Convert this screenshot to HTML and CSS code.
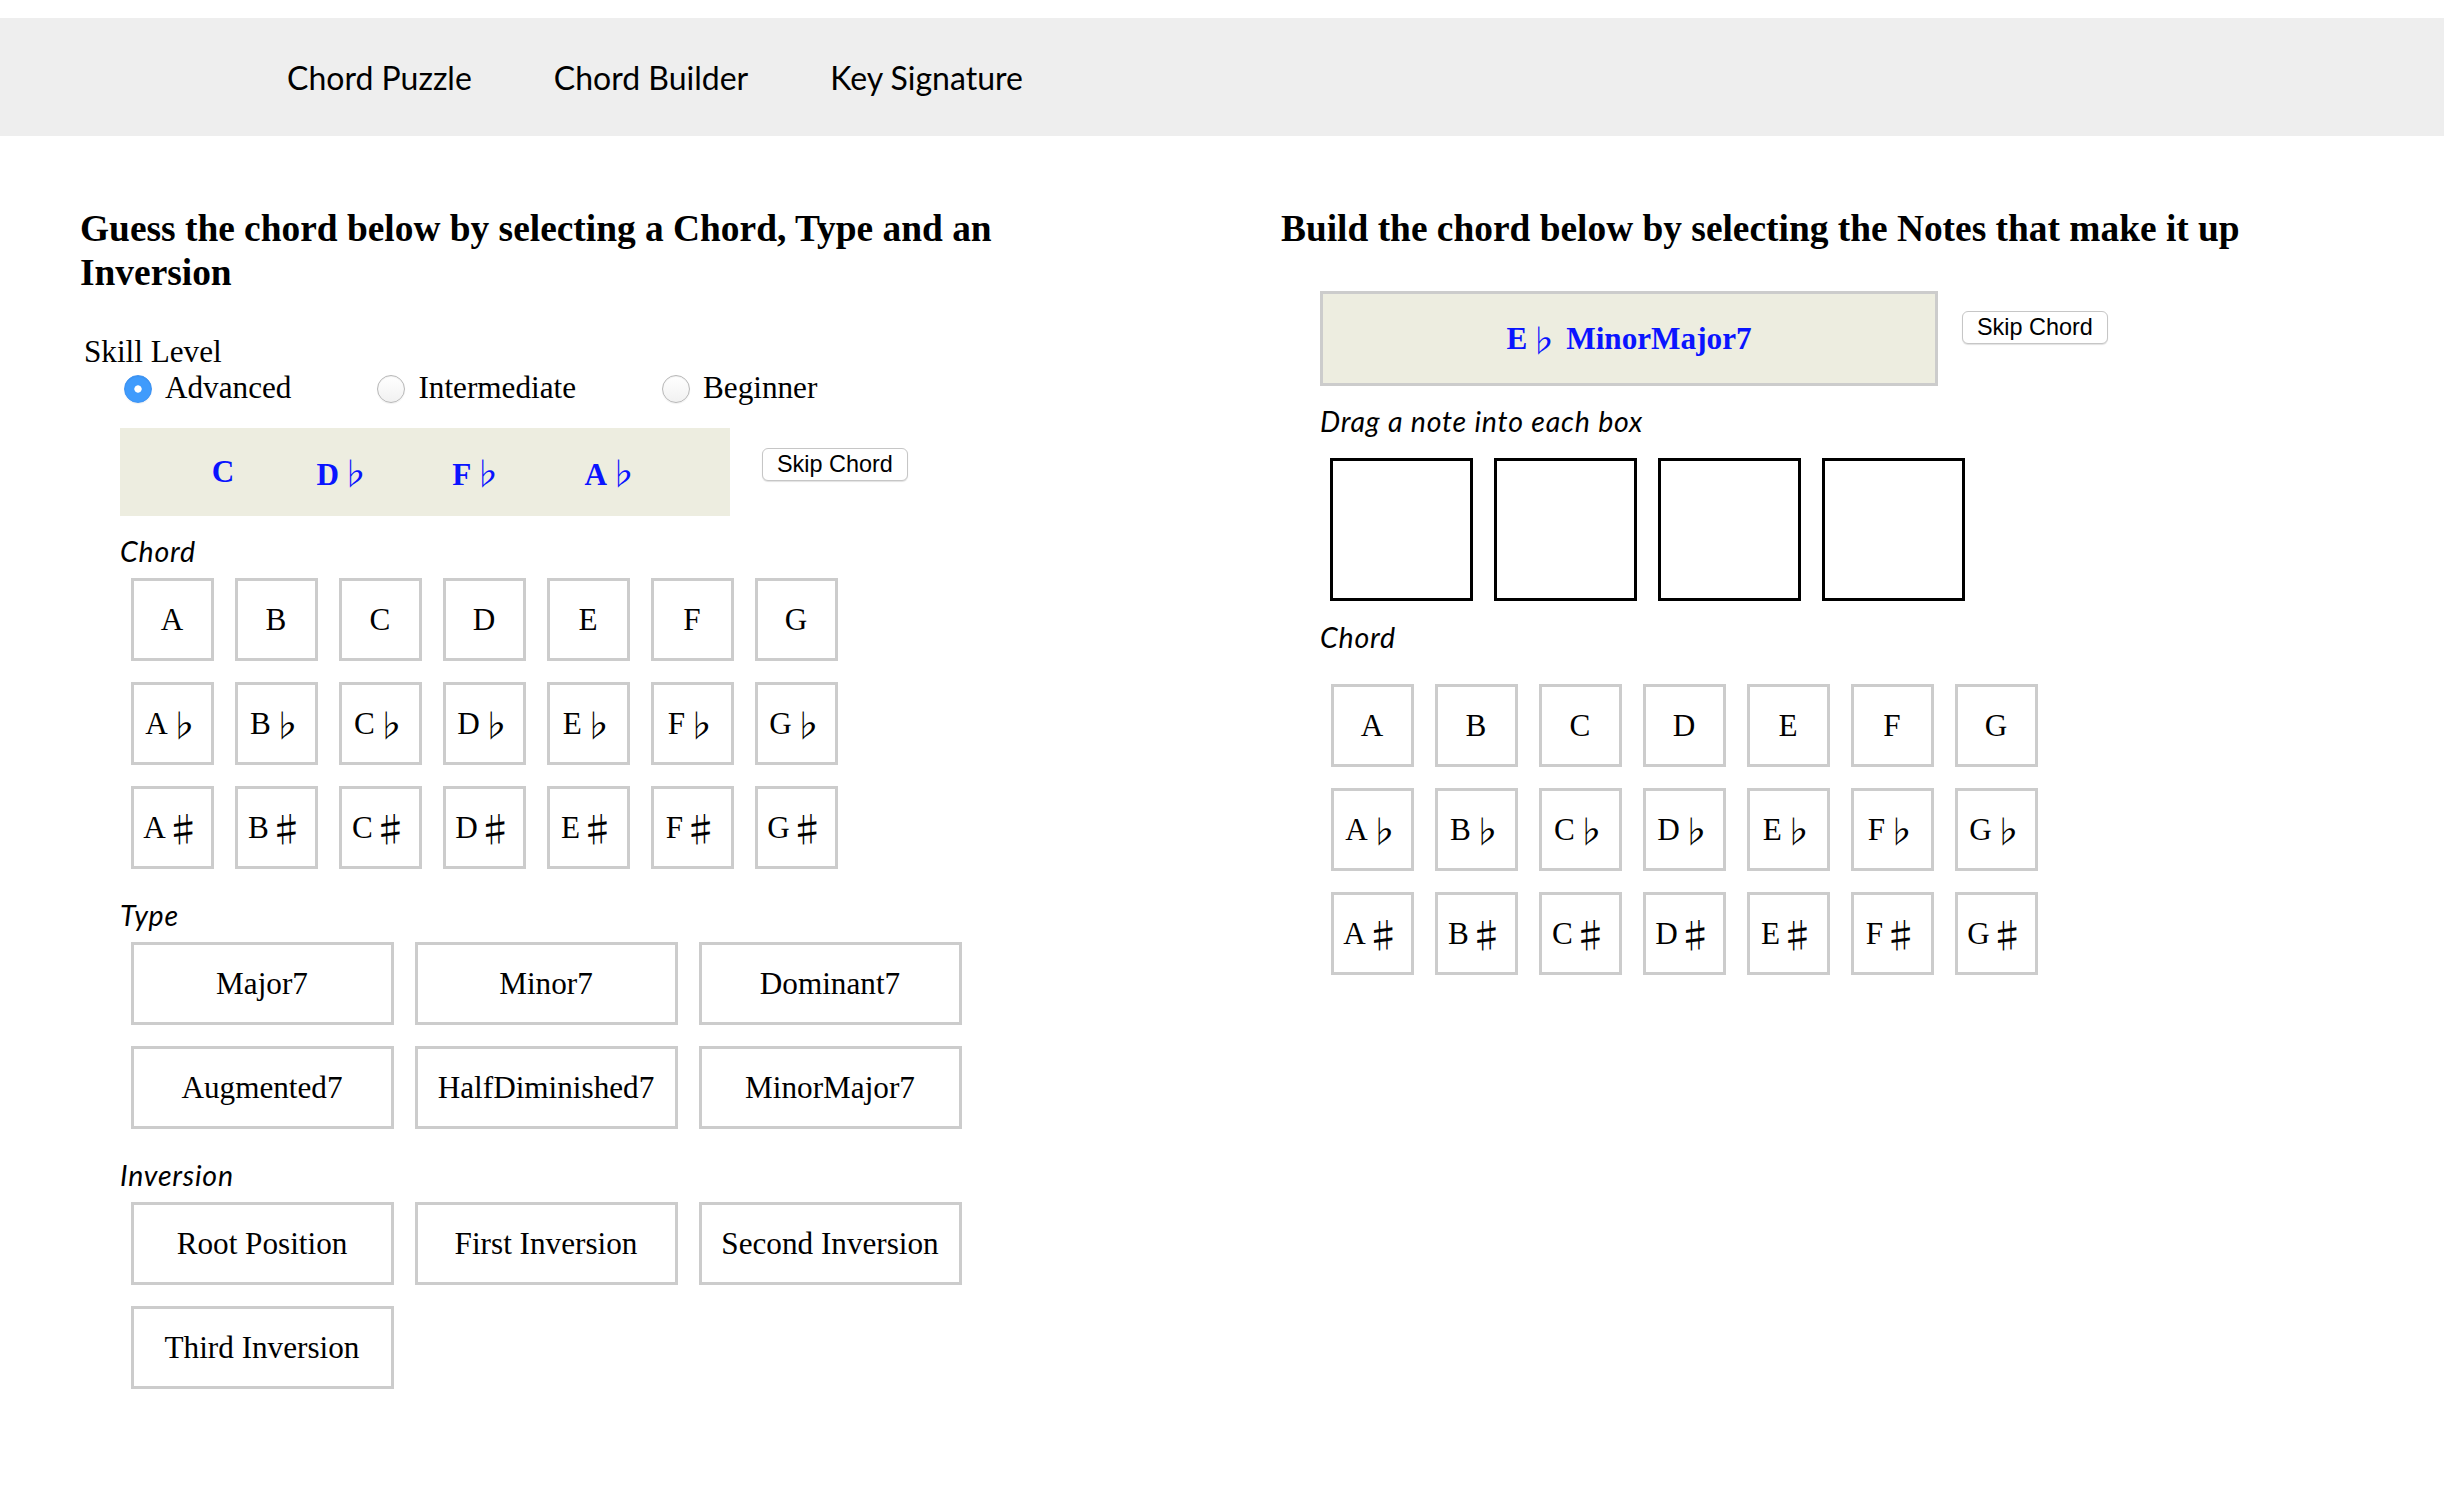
FILE: index.html
```html
<!DOCTYPE html>
<html lang="en">
<head>
<meta charset="utf-8">
<title>Chord Puzzle</title>
<link rel="stylesheet" href="styles.css">
</head>
<body>
<nav class="topnav">
  <a class="nav-link" href="#">Chord Puzzle</a>
  <a class="nav-link" href="#">Chord Builder</a>
  <a class="nav-link" href="#">Key Signature</a>
</nav>
<main class="page">
  <section class="col col-left">
    <h2 class="title">Guess the chord below by selecting a Chord, Type and an Inversion</h2>
    <div class="skill">
      <div class="skill-title">Skill Level</div>
      <div class="skill-options">
        <label class="opt"><input type="radio" name="level" checked><span>Advanced</span></label>
        <label class="opt"><input type="radio" name="level"><span>Intermediate</span></label>
        <label class="opt"><input type="radio" name="level"><span>Beginner</span></label>
      </div>
    </div>
    <div class="inner">
      <div class="display-row">
        <div class="display display-left"><span>C</span><span>D<span class="acc">♭</span></span><span>F<span class="acc">♭</span></span><span>A<span class="acc">♭</span></span></div>
        <button class="skip" type="button">Skip Chord</button>
      </div>
      <div class="label">Chord</div>
      <div class="grid notes">
        <div class="cell">A</div><div class="cell">B</div><div class="cell">C</div><div class="cell">D</div><div class="cell">E</div><div class="cell">F</div><div class="cell">G</div>
        <div class="cell">A<span class="acc">♭</span></div><div class="cell">B<span class="acc">♭</span></div><div class="cell">C<span class="acc">♭</span></div><div class="cell">D<span class="acc">♭</span></div><div class="cell">E<span class="acc">♭</span></div><div class="cell">F<span class="acc">♭</span></div><div class="cell">G<span class="acc">♭</span></div>
        <div class="cell">A<span class="acc sharp">♯</span></div><div class="cell">B<span class="acc sharp">♯</span></div><div class="cell">C<span class="acc sharp">♯</span></div><div class="cell">D<span class="acc sharp">♯</span></div><div class="cell">E<span class="acc sharp">♯</span></div><div class="cell">F<span class="acc sharp">♯</span></div><div class="cell">G<span class="acc sharp">♯</span></div>
      </div>
      <div class="label">Type</div>
      <div class="grid types">
        <div class="cell">Major7</div><div class="cell">Minor7</div><div class="cell">Dominant7</div>
        <div class="cell">Augmented7</div><div class="cell">HalfDiminished7</div><div class="cell">MinorMajor7</div>
      </div>
      <div class="label">Inversion</div>
      <div class="grid types">
        <div class="cell">Root Position</div><div class="cell">First Inversion</div><div class="cell">Second Inversion</div>
        <div class="cell">Third Inversion</div>
      </div>
    </div>
  </section>
  <section class="col col-right">
    <h2 class="title">Build the chord below by selecting the Notes that make it up</h2>
    <div class="inner">
      <div class="display-row">
        <div class="display display-right">E<span class="acc">♭</span> MinorMajor7</div>
        <button class="skip" type="button">Skip Chord</button>
      </div>
      <div class="label">Drag a note into each box</div>
      <div class="drops">
        <div class="drop"></div><div class="drop"></div><div class="drop"></div><div class="drop"></div>
      </div>
      <div class="label">Chord</div>
      <div class="grid notes grid-right">
        <div class="cell">A</div><div class="cell">B</div><div class="cell">C</div><div class="cell">D</div><div class="cell">E</div><div class="cell">F</div><div class="cell">G</div>
        <div class="cell">A<span class="acc">♭</span></div><div class="cell">B<span class="acc">♭</span></div><div class="cell">C<span class="acc">♭</span></div><div class="cell">D<span class="acc">♭</span></div><div class="cell">E<span class="acc">♭</span></div><div class="cell">F<span class="acc">♭</span></div><div class="cell">G<span class="acc">♭</span></div>
        <div class="cell">A<span class="acc sharp">♯</span></div><div class="cell">B<span class="acc sharp">♯</span></div><div class="cell">C<span class="acc sharp">♯</span></div><div class="cell">D<span class="acc sharp">♯</span></div><div class="cell">E<span class="acc sharp">♯</span></div><div class="cell">F<span class="acc sharp">♯</span></div><div class="cell">G<span class="acc sharp">♯</span></div>
      </div>
    </div>
  </section>
</main>
</body>
</html>
```

FILE: styles.css
```css
* { box-sizing: border-box; }
html, body { margin: 0; background: #fff; }
body {
  font-family: "Liberation Serif", "Noto Sans CJK JP", serif;
  color: #000;
}
.topnav {
  margin-top: 18px;
  height: 118px;
  background: #eeeeee;
  display: flex;
  align-items: center;
  padding-left: 287px;
  gap: 82px;
}
.nav-link {
  font-family: Lato, "Noto Sans", sans-serif;
  font-size: 32px;
  color: #000;
  text-decoration: none;
}
.page {
  display: flex;
  padding: 71px 0 60px 80px;
}
.col-left { width: 1000px; flex: none; }
.col-right { margin-left: 201px; flex: 1; }
.title {
  font-size: 37.4px;
  line-height: 44px;
  font-weight: bold;
  margin: 0;
}
.skill {
  margin: 39px 0 0 4px;
  font-size: 31.2px;
  line-height: 35.6px;
}
.skill-options {
  display: flex;
  height: 35.6px;
  align-items: center;
  margin-left: 40px;
  column-gap: 86px;
}
.opt { display: flex; align-items: center; gap: 13px; }
.opt input {
  appearance: none;
  -webkit-appearance: none;
  margin: 3px 0 0;
  width: 28px;
  height: 28px;
  border-radius: 50%;
  border: 1px solid #b8b8b8;
  background: linear-gradient(#ffffff, #f1f1f1);
  box-shadow: inset 0 1px 1px rgba(0,0,0,.06), 0 1px 1px rgba(0,0,0,.06);
}
.opt input:checked {
  border-color: #3d92f2;
  background: radial-gradient(circle, #ffffff 0 3.3px, #3f9bfc 4px);
}
.acc {
  font-family: "Noto Sans CJK JP", sans-serif;
  font-weight: normal;
}
.sharp { font-size: 35px; }
.inner { margin-left: 40px; }
.display-row { display: flex; align-items: flex-start; }
.col-left .display-row { margin-top: 22.8px; }
.display {
  background: #edede0;
  display: flex;
  align-items: center;
  justify-content: center;
  color: #0a14ff;
  font-weight: bold;
  font-size: 31.2px;
  white-space: pre;
}
.display-left { width: 610px; height: 88px; gap: 82px; }
.skip {
  margin: 20px 0 0 32px;
  height: 33px;
  padding: 0 14px;
  font-family: "Liberation Sans", Arial, sans-serif;
  font-size: 23.4px;
  background: #fff;
  border: 1px solid #c6c6c6;
  border-radius: 6px;
  box-shadow: 0 1px 1px rgba(0,0,0,.12);
  color: #000;
}
.label {
  margin-top: 18px;
  font-family: Lato, "Noto Sans", sans-serif;
  font-style: italic;
  font-size: 28.5px;
  letter-spacing: 0.8px;
  line-height: 34px;
}
.grid {
  display: grid;
  gap: 21px;
  padding: 10.5px;
  grid-auto-rows: 83px;
}
.notes { grid-template-columns: repeat(7, 83px); }
.types { grid-template-columns: repeat(3, 263px); }
.cell {
  border: 3px solid #cccccc;
  display: flex;
  align-items: center;
  justify-content: center;
  font-size: 31.2px;
}
.col-right .inner { margin-left: 39px; }
.col-right .display-row { margin-top: 40px; }
.display-right { width: 618px; height: 95px; border: 3.5px solid #cccccc; }
.col-right .skip { margin-left: 24px; }
.drops { display: flex; gap: 21px; padding: 20px 10px 1px; }
.drop { width: 143px; height: 143px; border: 3px solid #000; flex: none; }
.grid-right { margin-top: 19.5px; }
```
